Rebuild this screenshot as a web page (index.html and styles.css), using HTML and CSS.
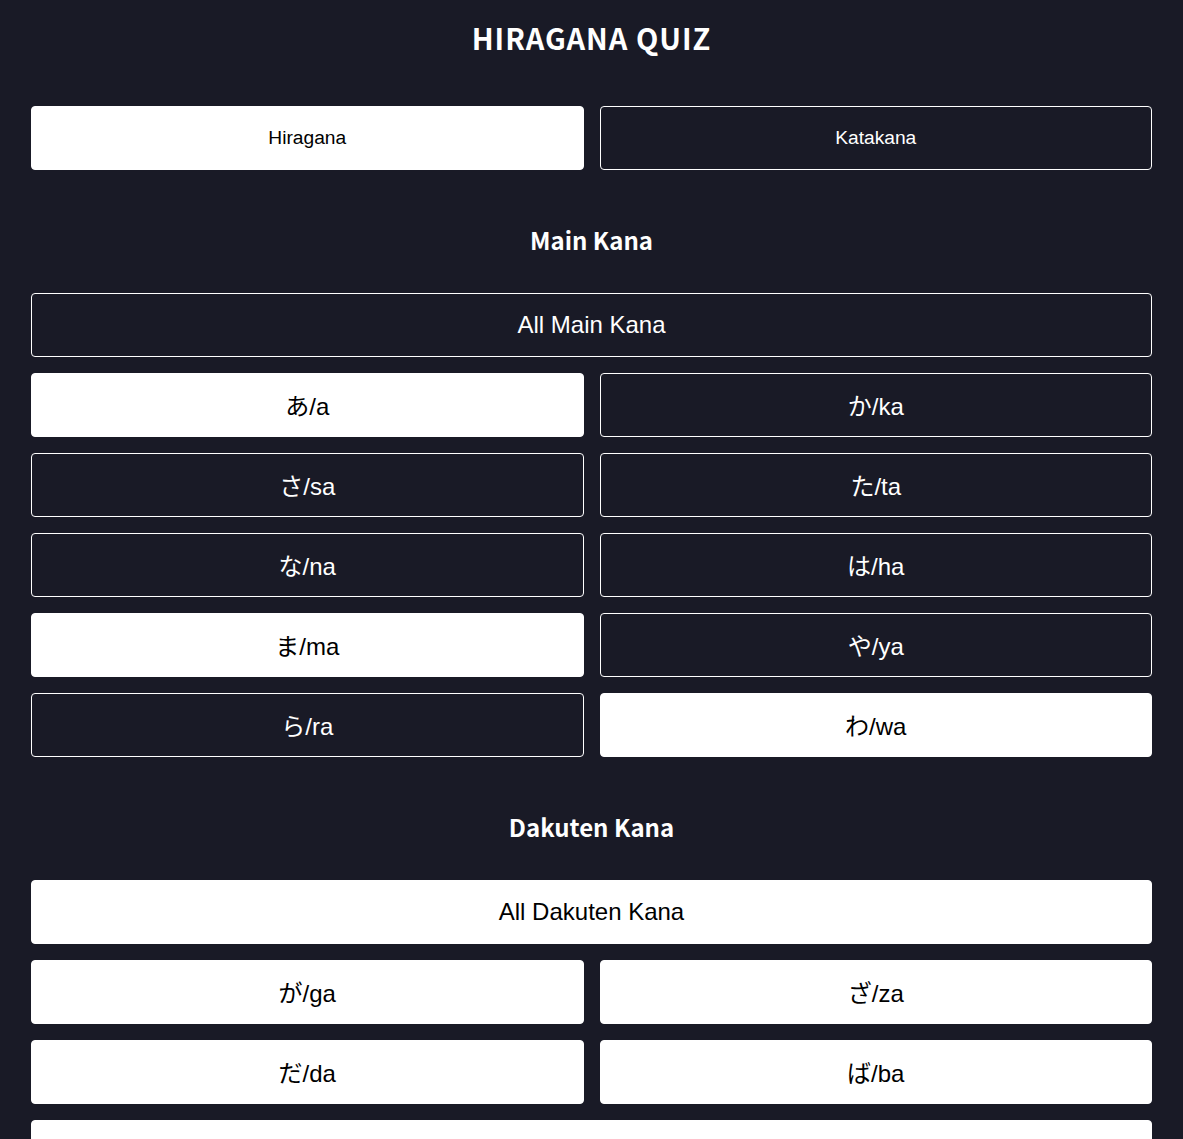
FILE: index.html
```html
<!DOCTYPE html>
<html lang="en">
<head>
<meta charset="utf-8">
<title>Hiragana Quiz</title>
<link rel="stylesheet" href="styles.css">
</head>
<body>
<main class="page">
  <h1 class="title">HIRAGANA QUIZ</h1>
  <div class="grid">
    <button class="btn small on">Hiragana</button>
    <button class="btn small">Katakana</button>
  </div>

  <h2 class="heading">Main Kana</h2>
  <div class="grid">
    <button class="btn wide">All Main Kana</button>
    <button class="btn on">あ/a</button>
    <button class="btn">か/ka</button>
    <button class="btn">さ/sa</button>
    <button class="btn">た/ta</button>
    <button class="btn">な/na</button>
    <button class="btn">は/ha</button>
    <button class="btn on">ま/ma</button>
    <button class="btn">や/ya</button>
    <button class="btn">ら/ra</button>
    <button class="btn on">わ/wa</button>
  </div>

  <h2 class="heading">Dakuten Kana</h2>
  <div class="grid">
    <button class="btn wide on">All Dakuten Kana</button>
    <button class="btn on">が/ga</button>
    <button class="btn on">ざ/za</button>
    <button class="btn on">だ/da</button>
    <button class="btn on">ば/ba</button>
    <button class="btn wide on">ぱ/pa</button>
  </div>
</main>
</body>
</html>
```

FILE: styles.css
```css
* { box-sizing: border-box; }

html, body {
  margin: 0;
  background: #191a26;
}

.page {
  padding: 17px 31px 40px;
}

.title {
  margin: 0 0 49px;
  height: 40px;
  line-height: 40px;
  text-align: center;
  color: #ffffff;
  font-family: "Noto Sans CJK JP", "Source Sans Pro", sans-serif;
  font-size: 29px;
  font-weight: 600;
  letter-spacing: 1px;
}

.heading {
  margin: 50px 0 33px;
  height: 40px;
  line-height: 40px;
  text-align: center;
  color: #ffffff;
  font-family: "Noto Sans CJK JP", "Source Sans Pro", sans-serif;
  font-size: 24px;
  font-weight: 600;
}

.grid {
  display: grid;
  grid-template-columns: 1fr 1fr;
  gap: 16px;
}

.btn {
  height: 64px;
  margin: 0;
  padding: 0 0 2px;
  border: 1px solid #ffffff;
  border-radius: 4px;
  background: #191a26;
  color: #ffffff;
  font-family: "Liberation Sans", Arial, "Noto Sans CJK JP", sans-serif;
  font-size: 24px;
}

.btn.small,
.btn.wide {
  padding: 0;
}

.btn.small {
  font-size: 19.2px;
}

.btn.on {
  background: #ffffff;
  color: #000000;
}

.btn.wide {
  grid-column: 1 / -1;
}
```
